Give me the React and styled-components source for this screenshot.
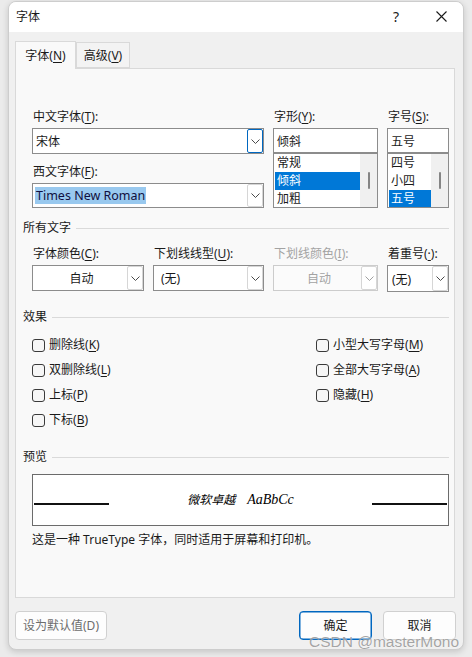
import React from 'react';
import styled, { createGlobalStyle } from 'styled-components';

const GlobalStyle = createGlobalStyle`
  html, body {
    margin: 0;
    padding: 0;
  }
  body {
    background: #e9e9e9;
    font-family: "Noto Sans", "Noto Sans CJK SC", sans-serif;
    font-size: 12px;
    color: #1a1a1a;
  }
`;

const Screen = styled.div`
  position: relative;
  width: 472px;
  height: 657px;
  box-sizing: border-box;
  padding: 1px 0 0 8px;
  overflow: hidden;
  background: #ebebeb;
`;

const Dialog = styled.div`
  width: 456px;
  height: 649px;
  box-sizing: border-box;
  border: 1px solid #cdcdcd;
  border-radius: 8px;
  background: #f0f0f0;
  box-shadow: 0 2px 6px rgba(0, 0, 0, 0.16);
  display: flex;
  flex-direction: column;
  overflow: hidden;
`;

const TitleBar = styled.div`
  height: 29px;
  flex: none;
  background: #fff;
  display: flex;
  align-items: center;
  padding: 0 0 1px 7px;
`;

const Title = styled.div`
  flex: 1;
  line-height: 16px;
`;

const HelpButton = styled.div`
  width: 30px;
  margin-right: 8px;
  text-align: center;
  font-size: 14px;
  line-height: 16px;
`;

const CloseButton = styled.div`
  width: 44px;
  display: flex;
  justify-content: center;
  align-items: center;
`;

const TabRow = styled.div`
  display: flex;
  align-items: flex-end;
  margin: 9px 0 0 6px;
  position: relative;
  z-index: 1;
`;

const Tab = styled.div`
  box-sizing: border-box;
  width: ${p => p.$w}px;
  height: ${p => (p.$active ? 28 : 26)}px;
  margin-bottom: ${p => (p.$active ? -1 : 0)}px;
  border: 1px solid #d9d9d9;
  border-bottom: ${p => (p.$active ? 'none' : '1px solid #d9d9d9')};
  background: ${p => (p.$active ? '#f9f9f9' : '#f3f3f3')};
  display: flex;
  align-items: center;
  justify-content: center;
  padding-top: ${p => (p.$active ? 0 : 2)}px;
  line-height: 16px;
`;

const Panel = styled.div`
  flex: none;
  height: 530px;
  box-sizing: border-box;
  margin: 0 8px 0 6px;
  border: 1px solid #d9d9d9;
  background: #f9f9f9;
  padding: 40px 5px 0 7px;
`;

const U = styled.span`
  text-decoration: underline;
  text-underline-offset: 2px;
`;

const Indent = styled.div`
  margin-left: 9px;
`;

const FontGrid = styled.div`
  display: grid;
  grid-template-columns: 232px 105px 62px;
  column-gap: 9px;
`;

const ColorGrid = styled.div`
  display: grid;
  grid-template-columns: 112px 111px 105px 62px;
  column-gap: 9px;
  margin-top: 10px;
`;

const Column = styled.div`
  display: flex;
  flex-direction: column;
`;

const Label = styled.div`
  height: 16px;
  line-height: 16px;
  margin: ${p => p.$top || 0}px 0 3px 1px;
  white-space: nowrap;
  color: ${p => (p.$disabled ? '#a3a3a3' : '#1a1a1a')};
`;

const Combo = styled.div`
  box-sizing: border-box;
  height: ${p => p.$h || 26}px;
  border: 1px solid ${p => (p.$disabled ? '#cccccc' : '#8c8c8c')};
  background: ${p => (p.$disabled ? '#fbfbfb' : '#fff')};
  display: flex;
`;

const ComboText = styled.div`
  flex: 1;
  display: flex;
  align-items: center;
  justify-content: ${p => (p.$center ? 'center' : 'flex-start')};
  padding-left: ${p => p.$pad ?? 3}px;
  color: ${p => (p.$disabled ? '#a3a3a3' : '#1a1a1a')};
  white-space: nowrap;
  overflow: hidden;
`;

const Highlight = styled.span`
  background: #99c9ef;
  color: #101040;
  font-size: 12.5px;
  line-height: 17px;
  padding: 0 1px;
`;

const ChevronBox = styled.div`
  box-sizing: border-box;
  width: 16px;
  flex: none;
  border: 1px solid ${p => (p.$focus ? '#0067c0' : '#d6d6d6')};
  border-radius: 2px;
  background: #fff;
  display: flex;
  align-items: center;
  justify-content: center;
`;

const ListBox = styled.div`
  box-sizing: border-box;
  height: 55px;
  border: 1px solid #8c8c8c;
  background: #fff;
  display: flex;
  overflow: hidden;
`;

const ListItems = styled.div`
  flex: 1;
  margin-left: 1px;
  display: flex;
  flex-direction: column;
`;

const ListItem = styled.div`
  height: 18px;
  flex: none;
  line-height: 18px;
  padding-left: 2px;
  background: ${p => (p.$selected ? '#0078d7' : 'transparent')};
  color: ${p => (p.$selected ? '#fff' : '#1a1a1a')};
`;

const Track = styled.div`
  width: 17px;
  flex: none;
  background: #f0f0f0;
  display: flex;
  align-items: center;
  justify-content: center;
`;

const Thumb = styled.div`
  width: 2px;
  height: 17px;
  border-radius: 1px;
  background: #858585;
`;

const SectionHeader = styled.div`
  display: flex;
  align-items: center;
  gap: 5px;
  height: 16px;
  line-height: 16px;
  margin-top: ${p => p.$top}px;
`;

const Rule = styled.div`
  flex: 1;
  height: 1px;
  background: #dadada;
`;

const EffectsGrid = styled.div`
  display: grid;
  grid-template-columns: 284px 1fr;
  grid-auto-rows: 18px;
  row-gap: 7px;
  margin-top: 11px;
`;

const CheckRow = styled.label`
  display: flex;
  align-items: center;
  gap: 4px;
  line-height: 16px;
  white-space: nowrap;
`;

const Box = styled.span`
  box-sizing: border-box;
  width: 13px;
  height: 13px;
  border: 1px solid #3a3a3a;
  border-radius: 3px;
  background: #f6f6f6;
`;

const Preview = styled.div`
  box-sizing: border-box;
  height: 52px;
  margin-top: 9px;
  border: 1px solid #6b6b6b;
  background: #fff;
  display: flex;
  align-items: flex-end;
  padding: 0 1px 20px;
`;

const BaseLine = styled.div`
  width: 75px;
  height: 2px;
  background: #111;
`;

const SampleText = styled.div`
  flex: 1;
  text-align: center;
  line-height: 14px;
  margin-bottom: -2px;
  font-style: italic;
  color: #000;
`;

const SampleCn = styled.span`
  font-family: "Noto Sans CJK SC", sans-serif;
  font-size: 12px;
  margin-right: 12px;
`;

const SampleLatin = styled.span`
  font-family: "Liberation Serif", serif;
  font-size: 14px;
`;

const Description = styled.div`
  margin-top: 6px;
  line-height: 16px;
`;

const Footer = styled.div`
  display: flex;
  justify-content: space-between;
  margin-top: 13px;
  padding: 0 7px 0 6px;
`;

const ButtonGroup = styled.div`
  display: flex;
  gap: 11px;
`;

const Button = styled.div`
  box-sizing: border-box;
  width: ${p => p.$w}px;
  height: 29px;
  border: 1px solid ${p => (p.$primary ? '#0067c0' : '#d0d0d0')};
  box-shadow: ${p => (p.$primary ? 'inset 0 0 0 0.5px #0067c0' : 'none')};
  border-radius: 4px;
  background: #fdfdfd;
  color: ${p => (p.$muted ? '#6d6d6d' : '#1a1a1a')};
  display: flex;
  align-items: center;
  justify-content: center;
  line-height: 16px;
`;

const Watermark = styled.div`
  position: absolute;
  left: 309px;
  top: 633px;
  font-family: "Liberation Sans", sans-serif;
  font-size: 15.5px;
  line-height: 18px;
  color: rgba(105, 105, 105, 0.6);
  text-shadow: 0 0 1px rgba(255, 255, 255, 0.9);
  white-space: nowrap;
`;

const Chevron = ({ color = '#4a4a4a' }) => (
  <svg width="9" height="5" viewBox="0 0 9 5">
    <polyline points="0.5,0.5 4.5,4.5 8.5,0.5" fill="none" stroke={color} strokeWidth="1" />
  </svg>
);

const CloseIcon = () => (
  <svg width="11" height="11" viewBox="0 0 11 11">
    <path d="M0.5 0.5 L10.5 10.5 M10.5 0.5 L0.5 10.5" stroke="#1a1a1a" strokeWidth="1.1" />
  </svg>
);

const Dropdown = ({ children, h, center, pad, disabled, focus }) => (
  <Combo $h={h} $disabled={disabled}>
    <ComboText $center={center} $pad={pad} $disabled={disabled}>{children}</ComboText>
    <ChevronBox $focus={focus}>
      <Chevron color={disabled ? '#a0a0a0' : '#4a4a4a'} />
    </ChevronBox>
  </Combo>
);

const List = ({ items, selected }) => (
  <ListBox>
    <ListItems>
      {items.map(item => (
        <ListItem key={item} $selected={item === selected}>{item}</ListItem>
      ))}
    </ListItems>
    <Track>
      <Thumb />
    </Track>
  </ListBox>
);

const effects = [
  ['删除线', 'K'],
  ['小型大写字母', 'M'],
  ['双删除线', 'L'],
  ['全部大写字母', 'A'],
  ['上标', 'P'],
  ['隐藏', 'H'],
  ['下标', 'B'],
];

const App = () => {
  return (
    <Screen>
      <GlobalStyle />
      <Dialog>
        <TitleBar>
          <Title>字体</Title>
          <HelpButton>?</HelpButton>
          <CloseButton>
            <CloseIcon />
          </CloseButton>
        </TitleBar>

        <TabRow>
          <Tab $active $w={61}>字体(<U>N</U>)</Tab>
          <Tab $w={54}>高级(<U>V</U>)</Tab>
        </TabRow>

        <Panel>
          <Indent>
            <FontGrid>
              <Column>
                <Label>中文字体(<U>T</U>):</Label>
                <Dropdown h={26} focus>宋体</Dropdown>
                <Label $top={10}>西文字体(<U>F</U>):</Label>
                <Dropdown h={25} pad={2}>
                  <Highlight>Times New Roman</Highlight>
                </Dropdown>
              </Column>
              <Column>
                <Label>字形(<U>Y</U>):</Label>
                <Combo $h={25}>
                  <ComboText>倾斜</ComboText>
                </Combo>
                <List items={['常规', '倾斜', '加粗']} selected="倾斜" />
              </Column>
              <Column>
                <Label>字号(<U>S</U>):</Label>
                <Combo $h={25}>
                  <ComboText>五号</ComboText>
                </Combo>
                <List items={['四号', '小四', '五号']} selected="五号" />
              </Column>
            </FontGrid>
          </Indent>

          <SectionHeader $top={12}>
            所有文字
            <Rule />
          </SectionHeader>
          <Indent>
            <ColorGrid>
              <Column>
                <Label>字体颜色(<U>C</U>):</Label>
                <Dropdown center>自动</Dropdown>
              </Column>
              <Column>
                <Label>下划线线型(<U>U</U>):</Label>
                <Dropdown pad={7}>(无)</Dropdown>
              </Column>
              <Column>
                <Label $disabled>下划线颜色(<U>I</U>):</Label>
                <Dropdown center disabled>自动</Dropdown>
              </Column>
              <Column>
                <Label>着重号(<U>·</U>):</Label>
                <Dropdown h={27} pad={4}>(无)</Dropdown>
              </Column>
            </ColorGrid>
          </Indent>

          <SectionHeader $top={17}>
            效果
            <Rule />
          </SectionHeader>
          <Indent>
            <EffectsGrid>
              {effects.map(([text, key]) => (
                <CheckRow key={key}>
                  <Box />
                  <span>
                    {text}(<U>{key}</U>)
                  </span>
                </CheckRow>
              ))}
            </EffectsGrid>
          </Indent>

          <SectionHeader $top={20}>
            预览
            <Rule />
          </SectionHeader>
          <Indent>
            <Preview>
              <BaseLine />
              <SampleText>
                <SampleCn>微软卓越</SampleCn>
                <SampleLatin>AaBbCc</SampleLatin>
              </SampleText>
              <BaseLine />
            </Preview>
            <Description>这是一种 TrueType 字体，同时适用于屏幕和打印机。</Description>
          </Indent>
        </Panel>

        <Footer>
          <Button $w={92} $muted>设为默认值(D)</Button>
          <ButtonGroup>
            <Button $w={73} $primary>确定</Button>
            <Button $w={73}>取消</Button>
          </ButtonGroup>
        </Footer>
      </Dialog>
      <Watermark>CSDN @masterMono</Watermark>
    </Screen>
  );
};

export default App;
